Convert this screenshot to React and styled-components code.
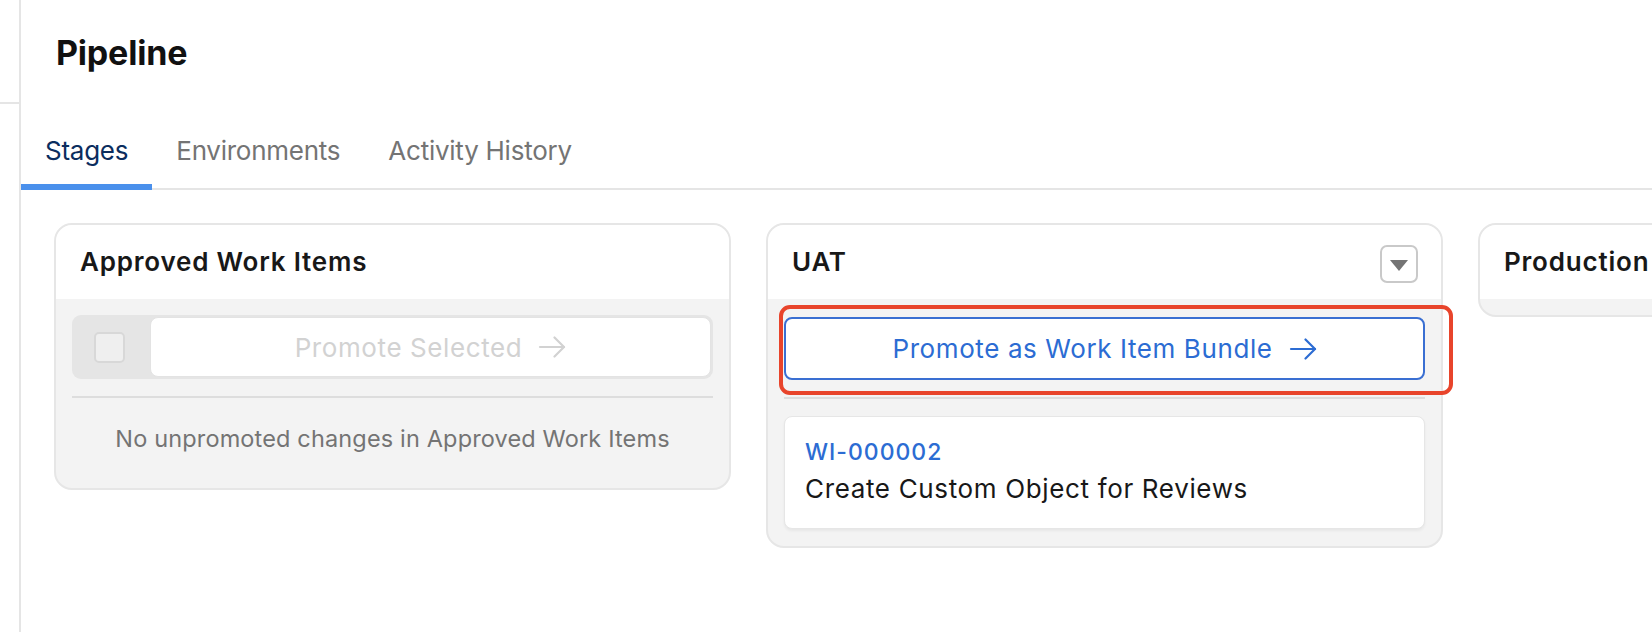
import React from "react";
import styled, { createGlobalStyle } from "styled-components";

const GlobalStyle = createGlobalStyle`
  html, body {
    margin: 0;
    padding: 0;
    background: #ffffff;
    font-family: Inter, "Noto Sans", "Liberation Sans", sans-serif;
    color: #181818;
  }
  * {
    box-sizing: border-box;
  }
`;

const Page = styled.div`
  display: flex;
  width: 100%;
  height: 632px;
  overflow: hidden;
`;

const Rail = styled.div`
  width: 21px;
  flex-shrink: 0;
  border-right: 2px solid #e5e5e5;
`;

const RailTop = styled.div`
  height: 104px;
  border-bottom: 2px solid #e5e5e5;
`;

const Main = styled.main`
  flex: 1;
  min-width: 0;
  overflow: hidden;
`;

const Header = styled.header`
  padding: 32px 35px 0;
`;

const Title = styled.h1`
  margin: 0;
  font-size: 34px;
  line-height: 41px;
  font-weight: 700;
  color: #111111;
  letter-spacing: -0.2px;
`;

const TabList = styled.nav`
  display: flex;
  margin-top: 45px;
  border-bottom: 2px solid #e5e5e5;
`;

const Tab = styled.div`
  padding: 17px 24px 18px;
  margin-bottom: -2px;
  font-size: 26px;
  line-height: 31px;
  letter-spacing: -0.25px;
  color: ${({ $active }) => ($active ? "#0b2d5e" : "#747474")};
  border-bottom: 6px solid ${({ $active }) => ($active ? "#4a90ec" : "transparent")};
`;

const Board = styled.div`
  display: flex;
  align-items: flex-start;
  gap: 35px;
  padding: 33px 0 0 33px;
`;

const Stage = styled.section`
  width: 677px;
  flex-shrink: 0;
  border: 2px solid #e6e6e6;
  border-radius: 18px;
  background: #f3f3f3;
`;

const StageHead = styled.div`
  height: 74px;
  display: flex;
  align-items: center;
  justify-content: space-between;
  padding: 0 23px 0 24px;
  background: #ffffff;
  border-radius: 16px 16px 0 0;
`;

const StageTitle = styled.h2`
  margin: 0;
  font-size: 26px;
  line-height: 30px;
  font-weight: 600;
  letter-spacing: 0.8px;
  color: #181818;
`;

const MenuButton = styled.button`
  width: 38px;
  height: 38px;
  margin-top: 4px;
  display: flex;
  align-items: center;
  justify-content: center;
  padding: 0;
  background: #ffffff;
  border: 2px solid #c9c9c9;
  border-radius: 7px;

  &::after {
    content: "";
    border-left: 9px solid transparent;
    border-right: 9px solid transparent;
    border-top: 11px solid #747474;
    margin-top: 2px;
  }
`;

const StageBody = styled.div`
  padding: 16px 16px ${({ $bottom }) => $bottom || "16px"};
`;

const SelectRow = styled.div`
  display: flex;
  height: 64px;
  padding: 2px 2px 2px 0;
  background: #e5e5e5;
  border-radius: 9px;
`;

const CheckCell = styled.div`
  width: 78px;
  display: flex;
  align-items: center;
  padding-left: 22px;
`;

const Checkbox = styled.span`
  width: 31px;
  height: 31px;
  background: #efefef;
  border: 2px solid #d8d8d8;
  border-radius: 5px;
`;

const ActionButton = styled.button`
  flex: 1;
  width: 100%;
  height: ${({ $primary }) => ($primary ? "63px" : "auto")};
  display: flex;
  align-items: center;
  justify-content: center;
  gap: 16px;
  background: #ffffff;
  border: ${({ $primary }) => ($primary ? "2px solid #3a6fd2" : "1px solid #e3e3e3")};
  border-radius: 8px;
  font-family: inherit;
  font-size: 26px;
  letter-spacing: 0.6px;
  color: ${({ $primary }) => ($primary ? "#2c6cd3" : "#d2d2d2")};
  padding: 0;
`;

const Arrow = () => (
  <svg width="28" height="22" viewBox="0 0 28 22" fill="none" stroke="currentColor"
    strokeWidth="2.2" strokeLinecap="round" strokeLinejoin="round">
    <path d="M2 11h24" />
    <path d="M16.5 1.5 26 11l-9.5 9.5" />
  </svg>
);

const Divider = styled.hr`
  margin: 17px 0 0;
  border: 0;
  border-top: 2px solid #dddddd;
`;

const Empty = styled.p`
  margin: 26px 0 18px;
  text-align: center;
  font-size: 23.5px;
  line-height: 30px;
  letter-spacing: 0.15px;
  color: #747474;
`;

const Highlight = styled.div`
  position: relative;
  margin-top: 2px;

  &::after {
    content: "";
    position: absolute;
    left: -5px;
    top: -12px;
    right: -28px;
    bottom: -15px;
    border: 4px solid #e8442b;
    border-radius: 11px;
    pointer-events: none;
  }
`;

const ItemCard = styled.article`
  margin-top: 17px;
  padding: 22px 20px 23px;
  background: #ffffff;
  border: 1px solid #e6e6e6;
  border-radius: 8px;
  box-shadow: 0 2px 3px rgba(0, 0, 0, 0.05);
`;

const ItemId = styled.div`
  font-size: 23px;
  line-height: 27px;
  font-weight: 500;
  letter-spacing: 1px;
  color: #2c6cd3;
`;

const ItemName = styled.div`
  margin-top: 7px;
  font-size: 26px;
  line-height: 32px;
  letter-spacing: 0.65px;
  color: #181818;
`;

const BodyPad = styled.div`
  height: 16px;
`;

export default function App() {
  return (
    <>
      <GlobalStyle />
      <Page>
        <Rail>
          <RailTop />
        </Rail>
        <Main>
          <Header>
            <Title>Pipeline</Title>
          </Header>
          <TabList>
            <Tab $active>Stages</Tab>
            <Tab>Environments</Tab>
            <Tab>Activity History</Tab>
          </TabList>
          <Board>
            <Stage>
              <StageHead>
                <StageTitle>Approved Work Items</StageTitle>
              </StageHead>
              <StageBody>
                <SelectRow>
                  <CheckCell>
                    <Checkbox />
                  </CheckCell>
                  <ActionButton disabled>
                    Promote Selected
                    <Arrow />
                  </ActionButton>
                </SelectRow>
                <Divider />
                <Empty>No unpromoted changes in Approved Work Items</Empty>
              </StageBody>
            </Stage>
            <Stage>
              <StageHead>
                <StageTitle>UAT</StageTitle>
                <MenuButton aria-label="More actions" />
              </StageHead>
              <StageBody $bottom="17px">
                <Highlight>
                  <ActionButton $primary>
                    Promote as Work Item Bundle
                    <Arrow />
                  </ActionButton>
                </Highlight>
                <Divider />
                <ItemCard>
                  <ItemId>WI-000002</ItemId>
                  <ItemName>Create Custom Object for Reviews</ItemName>
                </ItemCard>
              </StageBody>
            </Stage>
            <Stage>
              <StageHead>
                <StageTitle>Production</StageTitle>
              </StageHead>
              <BodyPad />
            </Stage>
          </Board>
        </Main>
      </Page>
    </>
  );
}
